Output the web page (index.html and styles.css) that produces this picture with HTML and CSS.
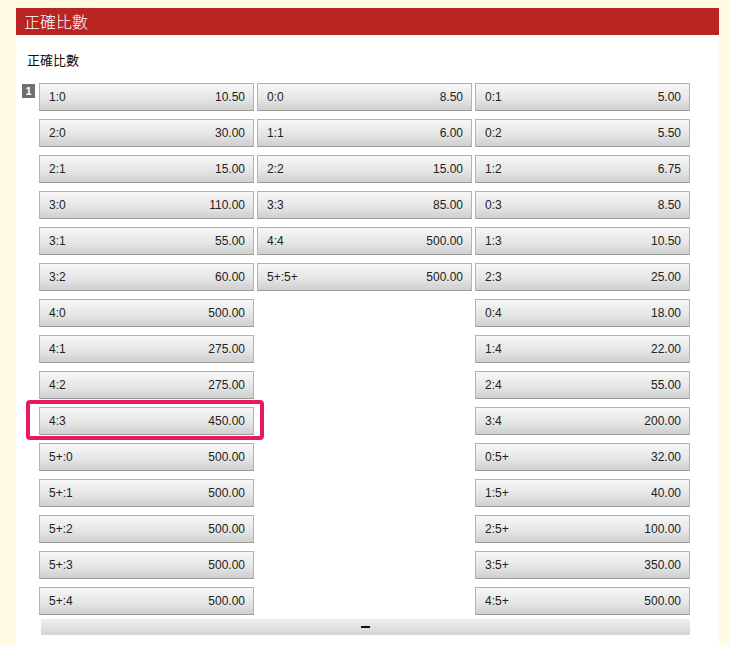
FILE: index.html
```html
<!doctype html>
<html>
  <head>
    <meta charset="utf-8">
    <title>正確比數</title>
    <link rel="stylesheet" href="styles.css">
  </head>
  <body>
    <div class="market">
      <div class="market-head">正確比數</div>
      <div class="market-body">
        <div class="market-title">正確比數</div>
        <div class="line">
          <div class="badge">1</div>
          <div class="odds">
            <div class="grid">
              <div class="odd"><span>1:0</span><span>10.50</span></div>
              <div class="odd"><span>0:0</span><span>8.50</span></div>
              <div class="odd"><span>0:1</span><span>5.00</span></div>

              <div class="odd"><span>2:0</span><span>30.00</span></div>
              <div class="odd"><span>1:1</span><span>6.00</span></div>
              <div class="odd"><span>0:2</span><span>5.50</span></div>

              <div class="odd"><span>2:1</span><span>15.00</span></div>
              <div class="odd"><span>2:2</span><span>15.00</span></div>
              <div class="odd"><span>1:2</span><span>6.75</span></div>

              <div class="odd"><span>3:0</span><span>110.00</span></div>
              <div class="odd"><span>3:3</span><span>85.00</span></div>
              <div class="odd"><span>0:3</span><span>8.50</span></div>

              <div class="odd"><span>3:1</span><span>55.00</span></div>
              <div class="odd"><span>4:4</span><span>500.00</span></div>
              <div class="odd"><span>1:3</span><span>10.50</span></div>

              <div class="odd"><span>3:2</span><span>60.00</span></div>
              <div class="odd"><span>5+:5+</span><span>500.00</span></div>
              <div class="odd"><span>2:3</span><span>25.00</span></div>

              <div class="odd"><span>4:0</span><span>500.00</span></div>
              <div class="empty"></div>
              <div class="odd"><span>0:4</span><span>18.00</span></div>

              <div class="odd"><span>4:1</span><span>275.00</span></div>
              <div class="empty"></div>
              <div class="odd"><span>1:4</span><span>22.00</span></div>

              <div class="odd"><span>4:2</span><span>275.00</span></div>
              <div class="empty"></div>
              <div class="odd"><span>2:4</span><span>55.00</span></div>

              <div class="odd marked"><span>4:3</span><span>450.00</span></div>
              <div class="empty"></div>
              <div class="odd"><span>3:4</span><span>200.00</span></div>

              <div class="odd"><span>5+:0</span><span>500.00</span></div>
              <div class="empty"></div>
              <div class="odd"><span>0:5+</span><span>32.00</span></div>

              <div class="odd"><span>5+:1</span><span>500.00</span></div>
              <div class="empty"></div>
              <div class="odd"><span>1:5+</span><span>40.00</span></div>

              <div class="odd"><span>5+:2</span><span>500.00</span></div>
              <div class="empty"></div>
              <div class="odd"><span>2:5+</span><span>100.00</span></div>

              <div class="odd"><span>5+:3</span><span>500.00</span></div>
              <div class="empty"></div>
              <div class="odd"><span>3:5+</span><span>350.00</span></div>

              <div class="odd"><span>5+:4</span><span>500.00</span></div>
              <div class="empty"></div>
              <div class="odd"><span>4:5+</span><span>500.00</span></div>
            </div>
            <div class="collapse"><span class="dash"></span></div>
          </div>
        </div>
      </div>
    </div>
  </body>
</html>
```

FILE: styles.css
```css
body { margin: 0; background: #fffbe2; font-family: "Liberation Sans", Arial, "Noto Sans CJK TC", sans-serif; color: #1a1a1a; }

.market { margin: 8px 11px 0 16px; width: 703px; }
.market-head { height: 27px; line-height: 27px; background: #b8241f; color: #fff; font-size: 16px; font-weight: 300; padding-left: 8px; font-family: "Noto Sans CJK TC", sans-serif; }
.market-body { background: #fff; padding: 16px 0 20px 6px; }
.market-title { font-size: 13px; line-height: 18px; height: 18px; padding-left: 5px; margin-bottom: 14px; color: #111; font-family: "Noto Sans CJK TC", sans-serif; }

.line { display: flex; align-items: flex-start; }
.badge { width: 13px; height: 14px; margin: 1px 4px 0 0; background: #6f6f6f; color: #fff; font-size: 11px; font-weight: bold; line-height: 14px; text-align: center; }

.odds { width: 651px; }
.grid { display: grid; grid-template-columns: repeat(3, 1fr); column-gap: 3px; row-gap: 8px; }
.odd { position: relative; height: 28px; box-sizing: border-box; border: 1px solid #b3b3b3; border-bottom-color: #9c9c9c; background: linear-gradient(#f7f7f7, #e6e6e6 55%, #cfcfcf); display: flex; justify-content: space-between; align-items: center; padding: 0 8px 0 9px; font-size: 12px; color: #222; }

.marked::after { content: ""; position: absolute; top: -8px; left: -14px; right: -11px; bottom: -6px; border: 4px solid #e8195d; border-radius: 4px; }

.collapse { margin: 4px 0 0 2px; height: 16px; background: linear-gradient(#f0f0f0, #d4d4d4); display: flex; justify-content: center; align-items: center; }
.dash { display: block; width: 9px; height: 2px; background: #111; }
```
